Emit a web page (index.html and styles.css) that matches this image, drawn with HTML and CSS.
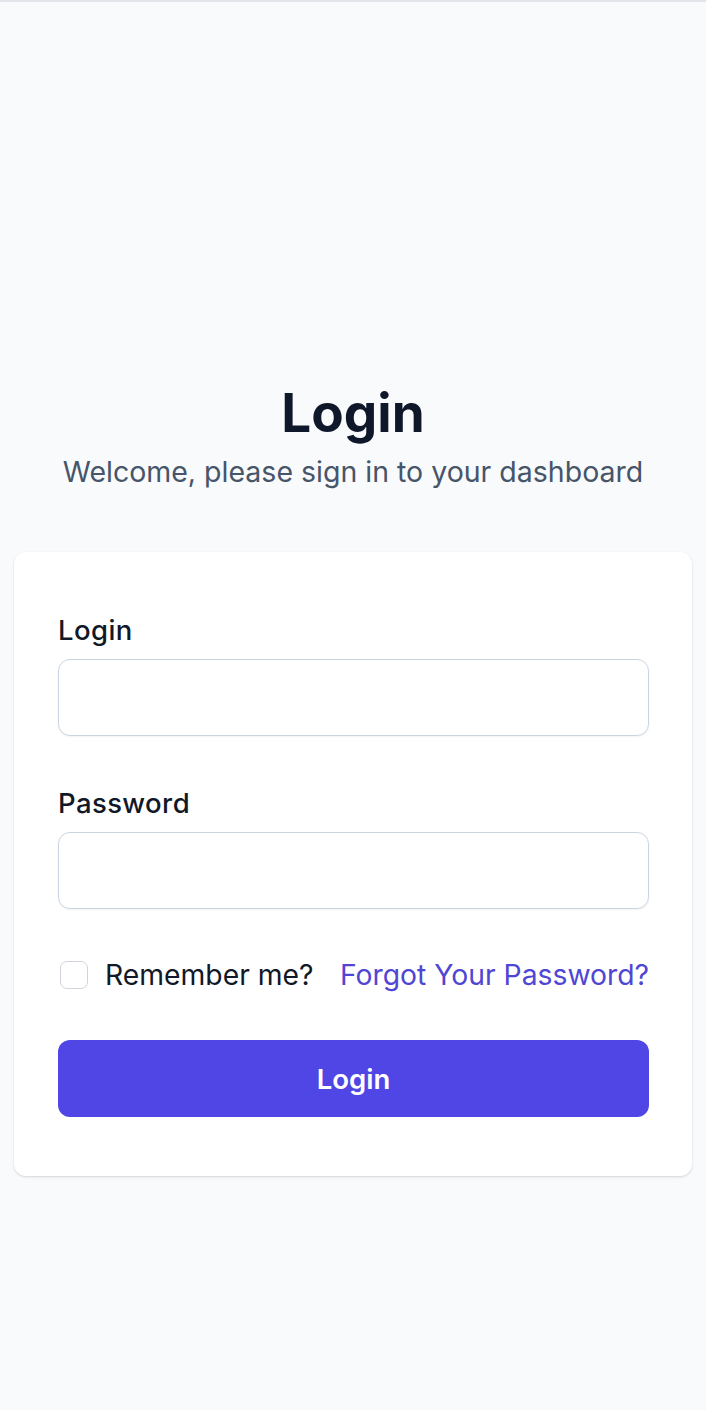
FILE: index.html
```html
<!DOCTYPE html>
<html lang="en">
<head>
    <meta charset="UTF-8">
    <meta name="viewport" content="width=device-width, initial-scale=1.0">
    <title>Login</title>
    <link rel="stylesheet" href="styles.css">
</head>
<body>
    <div class="page">
        <div class="header">
            <h1>Login</h1>
            <p class="subtitle">Welcome, please sign in to your dashboard</p>
        </div>

        <form class="card" onsubmit="return false;">
            <label class="field-label" for="login">Login</label>
            <input type="text" id="login" class="field-input">

            <label class="field-label second" for="password">Password</label>
            <input type="password" id="password" class="field-input">

            <div class="options">
                <label class="remember">
                    <input type="checkbox" class="checkbox">
                    <span>Remember me?</span>
                </label>
                <a href="#" class="forgot">Forgot Your Password?</a>
            </div>

            <button type="submit" class="submit-button">Login</button>
        </form>
    </div>
</body>
</html>
```

FILE: styles.css
```css
body {
    font-family: Inter, "Noto Sans", sans-serif;
    background-color: #f8fafc;
    color: #111827;
    margin: 0;
    border-top: 2px solid #e2e4ea;
}
.page {
    padding: 379px 14px 100px;
}
.header {
    text-align: center;
}
h1 {
    margin: 0;
    font-size: 53px;
    line-height: 64px;
    font-weight: 700;
    color: #0f172a;
}
.subtitle {
    margin: 7px 0 0;
    font-size: 28.5px;
    line-height: 40px;
    color: #475569;
}
.card {
    margin-top: 60px;
    background: white;
    border-radius: 12px;
    box-shadow: 0 1px 3px rgba(0, 0, 0, 0.1), 0 1px 2px rgba(0, 0, 0, 0.06);
    padding: 60px 43px 59px 44px;
    display: flex;
    flex-direction: column;
}
.field-label {
    font-size: 27.5px;
    line-height: 36px;
    font-weight: 500;
    letter-spacing: 0.4px;
    color: #111827;
}
.field-label.second {
    margin-top: 49px;
}
.field-input {
    margin-top: 11px;
    height: 77px;
    box-sizing: border-box;
    border: 1.5px solid #cbd5e1;
    border-radius: 12px;
    padding: 0 16px;
    font-size: 25px;
    font-family: inherit;
    box-shadow: 0 1px 2px rgba(0, 0, 0, 0.05);
}
.options {
    margin-top: 48px;
    display: flex;
    justify-content: space-between;
    align-items: center;
    height: 36px;
    font-size: 28.3px;
}
.remember {
    display: flex;
    align-items: center;
    gap: 17px;
    color: #111827;
}
.checkbox {
    appearance: none;
    margin: 0 0 0 2px;
    width: 28px;
    height: 28px;
    border: 1.5px solid #d1d5db;
    border-radius: 7px;
    background: white;
}
.forgot {
    color: #5046d4;
    text-decoration: none;
}
.submit-button {
    margin-top: 47px;
    height: 77px;
    border: none;
    border-radius: 12px;
    background: #4f46e5;
    color: white;
    font-family: inherit;
    font-size: 27.5px;
    font-weight: 600;
    cursor: pointer;
}
```
